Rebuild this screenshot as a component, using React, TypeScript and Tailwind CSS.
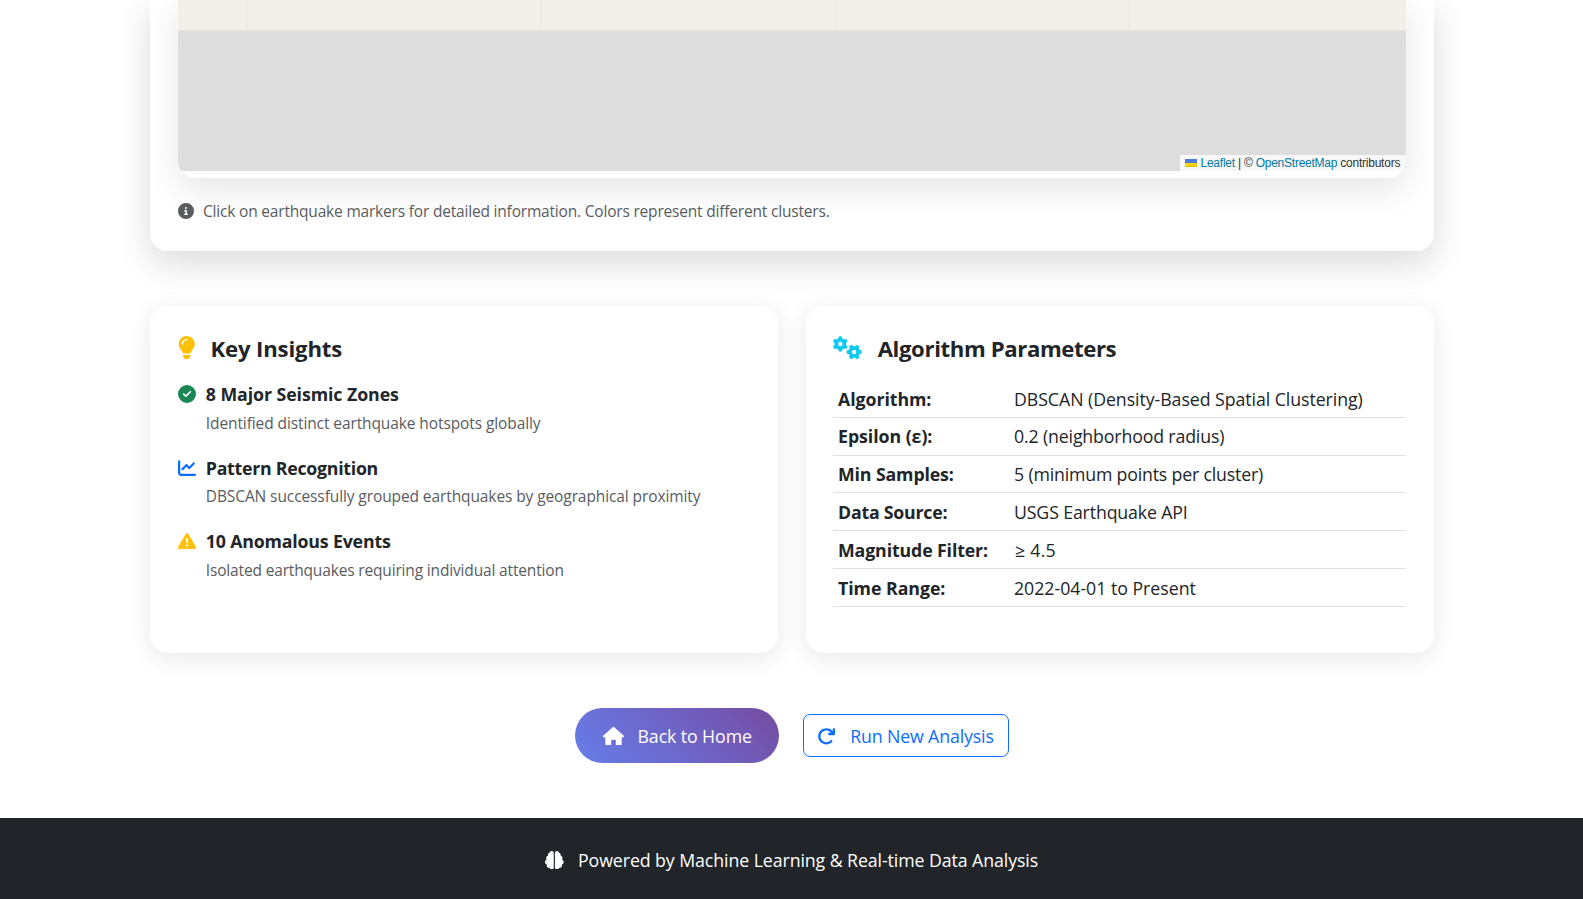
import React from "react";
import {
  FaArrowRotateRight,
  FaBrain,
  FaChartLine,
  FaCircleCheck,
  FaCircleInfo,
  FaGears,
  FaHouse,
  FaLightbulb,
  FaTriangleExclamation,
} from "react-icons/fa6";

const insights = [
  {
    icon: <FaCircleCheck className="size-[18px] text-[#198754]" />,
    title: "8 Major Seismic Zones",
    titleClass: "tracking-[-0.07px]",
    text: "Identified distinct earthquake hotspots globally",
    textClass: "mt-[6px] tracking-[-0.1px]",
  },
  {
    icon: <FaChartLine className="size-[18px] text-[#0d6efd]" />,
    title: "Pattern Recognition",
    titleClass: "tracking-[-0.26px]",
    text: "DBSCAN successfully grouped earthquakes by geographical proximity",
    textClass: "mt-[5.5px] mb-[0.5px] tracking-[-0.1px]",
  },
  {
    icon: <FaTriangleExclamation className="size-[18px] text-[#ffc107]" />,
    title: "10 Anomalous Events",
    titleClass: "tracking-[-0.17px]",
    text: "Isolated earthquakes requiring individual attention",
    textClass: "mt-[6px] tracking-[-0.16px]",
  },
];

const parameters = [
  ["Algorithm:", "leading-[38px] tracking-[-0.06px]", "DBSCAN (Density-Based Spatial Clustering)", "leading-[38px] tracking-[-0.06px]"],
  ["Epsilon (ε):", "leading-[37.5px] tracking-[-0.05px]", "0.2 (neighborhood radius)", "leading-[37.5px] tracking-[-0.15px]"],
  ["Min Samples:", "leading-[37.5px] tracking-[-0.13px]", "5 (minimum points per cluster)", "leading-[37.5px] tracking-[-0.18px]"],
  ["Data Source:", "leading-[38px] tracking-[-0.22px]", "USGS Earthquake API", "leading-[38px] tracking-[-0.14px]"],
  ["Magnitude Filter:", "leading-[38px] tracking-[-0.12px]", "≥ 4.5", "pl-px leading-[38px] tracking-[0.25px]"],
  ["Time Range:", "leading-[38px] tracking-[-0.04px]", "2022-04-01 to Present", "leading-[38px] tracking-[-0.02px]"],
];

function MapCard() {
  return (
    <section className="h-[251px] rounded-b-[17.5px] bg-white px-7 shadow-[0_11.7px_35px_rgba(0,0,0,0.15)]">
      <div className="h-[178px] overflow-hidden rounded-b-[17.5px] bg-white shadow-[0_11.7px_35px_rgba(0,0,0,0.1)]">
        <div className="flex h-[171px] flex-col bg-[#dddddd]">
          <div className="flex h-[31px] bg-[#f2efe9]">
            <div className="w-[69px] border-r border-b border-[#e8e6e2]" />
            <div className="w-[295px] border-r border-b border-[#e8e6e2]" />
            <div className="w-[294px] border-r border-b border-[#e8e6e2]" />
            <div className="w-[294px] border-r border-b border-[#e8e6e2]" />
            <div className="flex-1 border-b border-[#e8e6e2]" />
          </div>
          <div className="mt-auto flex h-4 w-[226px] items-center self-end bg-white/80 pl-[5px] font-['Liberation_Sans',Arial,sans-serif] text-[12px] leading-4 whitespace-pre text-[#333]">
            <svg viewBox="0 0 12 8" className="mr-[3.5px] h-2 w-3 shrink-0">
              <path fill="#4C7BE1" d="M0 0h12v4H0z" />
              <path fill="#FFD500" d="M0 4h12v3H0z" />
              <path fill="#E0BC00" d="M0 7h12v1H0z" />
            </svg>
            <span className="tracking-[-0.24px]">
              <a className="text-[#0078a8]">Leaflet</a> | © <a className="text-[#0078a8]">OpenStreetMap</a> contributors
            </span>
          </div>
        </div>
      </div>
      <p className="mt-[21px] flex h-[25px] items-center text-[15.51px] leading-[25px] text-[#595c5f]">
        <FaCircleInfo className="mb-px size-4 shrink-0" />
        <span className="ml-[9px] tracking-[-0.19px]">
          Click on earthquake markers for detailed information. Colors represent different clusters.
        </span>
      </p>
    </section>
  );
}

function InsightsCard() {
  return (
    <section className="h-[347px] rounded-[17.5px] bg-white p-7 shadow-[0_5.8px_23.3px_rgba(0,0,0,0.09)]">
      <h2 className="flex h-7 items-center text-[22.17px] leading-7 font-bold">
        <FaLightbulb className="h-[23.3px] w-[17.5px] shrink-0 text-[#ffc107]" />
        <span className="ml-[15px] tracking-[-0.16px]">Key Insights</span>
      </h2>
      <ul className="mt-[21px] flex flex-col gap-[21.5px]">
        {insights.map((item) => (
          <li key={item.title} className="flex gap-[9.8px]">
            <div className="mt-[2px]">{item.icon}</div>
            <div>
              <h3 className={`text-[17.74px] leading-[22px] font-bold ${item.titleClass}`}>{item.title}</h3>
              <p className={`text-[15.51px] leading-6 text-[#595c5f] ${item.textClass}`}>{item.text}</p>
            </div>
          </li>
        ))}
      </ul>
    </section>
  );
}

function ParametersCard() {
  return (
    <section className="h-[347px] rounded-[17.5px] bg-white p-7 shadow-[0_5.8px_23.3px_rgba(0,0,0,0.09)]">
      <h2 className="flex h-7 items-center text-[22.17px] leading-7 font-bold">
        <FaGears className="-ml-px h-[23.3px] w-[29.2px] shrink-0 text-[#0dcaf0]" />
        <span className="ml-[15.5px] tracking-[-0.38px]">Algorithm Parameters</span>
      </h2>
      <dl className="mt-[18px] -ml-px text-[17.74px]">
        {parameters.map(([name, nameClass, value, valueClass]) => (
          <div key={name} className="flex h-[37.8px] border-b border-[#dee2e6] pl-[5px]">
            <dt className={`w-[176px] shrink-0 font-bold ${nameClass}`}>{name}</dt>
            <dd className={valueClass}>{value}</dd>
          </div>
        ))}
      </dl>
    </section>
  );
}

export default function App() {
  return (
    <div className="flex h-[899px] flex-col overflow-hidden bg-white font-['Open_Sans','Noto_Sans',sans-serif] text-[#212529]">
      <main className="ml-[150px] w-[1284px]">
        <MapCard />
        <div className="mt-[55px] grid grid-cols-2 gap-7">
          <InsightsCard />
          <ParametersCard />
        </div>
        <div className="mt-[55px] flex items-center justify-center gap-6 text-[17.74px]">
          <a className="flex h-[55px] w-[204px] items-center rounded-full bg-[linear-gradient(45deg,#667eea,#764ba2)] pl-7 text-white">
            <FaHouse className="mt-px h-[18.67px] w-[21px] shrink-0" />
            <span className="mt-[2px] ml-[13.5px] tracking-[-0.09px] whitespace-nowrap">Back to Home</span>
          </a>
          <a className="flex h-[43px] w-[206px] items-center rounded-[7px] border border-[#0d6efd] pl-[13px] text-[#0d6efd]">
            <FaArrowRotateRight className="mt-px size-[18.67px] shrink-0" />
            <span className="mt-[2px] ml-[14.5px] tracking-[-0.13px] whitespace-nowrap">Run New Analysis</span>
          </a>
        </div>
      </main>
      <footer className="mt-auto flex h-[81px] items-center justify-center bg-[#212529] text-[17.74px] leading-7 text-white">
        <FaBrain className="mt-[3px] size-[18.67px] shrink-0" />
        <span className="mt-[3px] ml-[14.5px] tracking-[-0.08px]">Powered by Machine Learning &amp; Real-time Data Analysis</span>
      </footer>
    </div>
  );
}
